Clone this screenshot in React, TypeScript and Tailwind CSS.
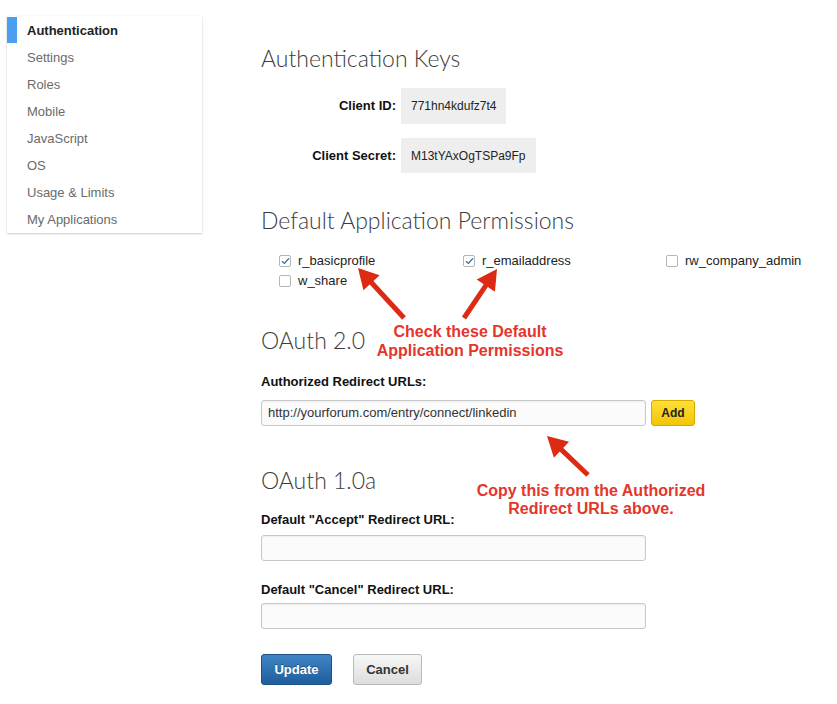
import React from "react";

const navItems = [
  "Authentication",
  "Settings",
  "Roles",
  "Mobile",
  "JavaScript",
  "OS",
  "Usage & Limits",
  "My Applications",
];

const Arrow = ({ x1, y1, x2, y2 }: { x1: number; y1: number; x2: number; y2: number }) => {
  // tail (x1,y1) -> tip (x2,y2)
  const dx = x2 - x1;
  const dy = y2 - y1;
  const len = Math.sqrt(dx * dx + dy * dy);
  const ux = dx / len;
  const uy = dy / len;
  const head = 20;
  const half = 11;
  const bx = x2 - ux * head;
  const by = y2 - uy * head;
  const pts = `${x2},${y2} ${bx - uy * half},${by + ux * half} ${bx + uy * half},${by - ux * half}`;
  return (
    <g>
      <line x1={x1} y1={y1} x2={bx + ux * 2} y2={by + uy * 2} stroke="#dc2a14" strokeWidth={5} />
      <polygon points={pts} fill="#dc2a14" />
    </g>
  );
};

const Check = ({ checked, label }: { checked?: boolean; label: string }) => (
  <label className="flex items-center gap-[7px] h-5">
    <span className="w-[12px] h-[12px] rounded-[2px] border border-[#b5b5b5] bg-white flex items-center justify-center">
      {checked && (
        <svg width="9" height="8" viewBox="0 0 9 8">
          <path d="M1 4.2 L3.4 6.4 L8 1.2" fill="none" stroke="#3d6f99" strokeWidth="1.3" />
        </svg>
      )}
    </span>
    <span className="text-[13px] text-[#222]">{label}</span>
  </label>
);

const Heading = ({ children, className }: { children: React.ReactNode; className?: string }) => (
  <h2 className={`font-['Lato',sans-serif] font-light text-[23px] leading-[28px] text-[#3c3c3c] ${className ?? ""}`}>
    {children}
  </h2>
);

const Label = ({ children, className }: { children: React.ReactNode; className?: string }) => (
  <div className={`text-[13px] leading-[18px] font-bold text-[#111] ${className ?? ""}`}>{children}</div>
);

const TextInput = ({ value }: { value?: string }) => (
  <div className="w-[385px] h-[26px] rounded-[3px] border border-[#c8c8c8] bg-[#fbfbfb] shadow-[inset_0_1px_2px_rgba(0,0,0,0.06)] px-[6px] flex items-center text-[13px] text-[#333]">
    {value}
  </div>
);

const App = () => {
  return (
    <div className="relative w-[837px] h-[704px] bg-white font-['Liberation_Sans',Arial,sans-serif] overflow-hidden">
      <div className="flex items-start">
        <nav className="ml-[7px] mt-[16px] w-[195px] bg-white pt-[1px] shadow-[0_1px_2px_rgba(0,0,0,0.22)]">
          {navItems.map((item, i) => (
            <div key={item} className="relative h-[27px] flex items-center pl-[20px]">
              {i === 0 && <span className="absolute left-0 top-0 bottom-[1px] w-[10px] bg-[#4a9ff0]" />}
              <span className={i === 0 ? "text-[13px] font-bold text-[#222]" : "text-[13px] text-[#6a6a6a]"}>{item}</span>
            </div>
          ))}
        </nav>

        <main className="ml-[59px] pt-[44px] w-[560px]">
          <Heading>Authentication Keys</Heading>

          <div className="mt-[16px] flex flex-col gap-[14px]">
            <div className="flex items-center">
              <Label className="w-[135px] text-right">Client ID:</Label>
              <div className="ml-[5px] h-[36px] px-[10px] flex items-center bg-[#eeeeee] text-[12px] text-[#222]">771hn4kdufz7t4</div>
            </div>
            <div className="flex items-center">
              <Label className="w-[135px] text-right">Client Secret:</Label>
              <div className="ml-[5px] h-[35px] px-[10px] flex items-center bg-[#eeeeee] text-[12px] text-[#222]">M13tYAxOgTSPa9Fp</div>
            </div>
          </div>

          <Heading className="mt-[33px]">Default Application Permissions</Heading>

          <div className="mt-[17px] pl-[18px] grid grid-cols-[184px_203px_1fr]">
            <Check checked label="r_basicprofile" />
            <Check checked label="r_emailaddress" />
            <Check label="rw_company_admin" />
            <Check label="w_share" />
          </div>

          <Heading className="mt-[35px]">OAuth 2.0</Heading>

          <Label className="mt-[19px]">Authorized Redirect URLs:</Label>
          <div className="mt-[9px] flex items-center gap-[5px]">
            <TextInput value="http://yourforum.com/entry/connect/linkedin" />
            <button className="w-[44px] h-[26px] rounded-[3px] border border-[#d6ab00] bg-gradient-to-b from-[#ffe033] to-[#f2c400] text-[12px] font-bold text-[#222]">
              Add
            </button>
          </div>

          <Heading className="mt-[40px]">OAuth 1.0a</Heading>

          <Label className="mt-[17px]">Default "Accept" Redirect URL:</Label>
          <div className="mt-[6px]">
            <TextInput />
          </div>

          <Label className="mt-[20px]">Default "Cancel" Redirect URL:</Label>
          <div className="mt-[4px]">
            <TextInput />
          </div>

          <div className="mt-[25px] flex gap-[21px]">
            <button className="w-[71px] h-[31px] rounded-[3px] border border-[#1b4f86] bg-gradient-to-b from-[#3f86c6] to-[#1f5d9c] text-[13px] font-bold text-white [text-shadow:0_-1px_0_rgba(0,0,0,0.35)]">
              Update
            </button>
            <button className="w-[69px] h-[31px] rounded-[3px] border border-[#b9b9b9] bg-gradient-to-b from-[#f7f7f7] to-[#dddddd] text-[13px] font-bold text-[#333]">
              Cancel
            </button>
          </div>
        </main>
      </div>

      {/* annotations */}
      <svg className="absolute inset-0 pointer-events-none" width="837" height="704">
        <Arrow x1={404} y1={318} x2={358} y2={268} />
        <Arrow x1={464} y1={318} x2={497} y2={269} />
        <Arrow x1={588} y1={475} x2={547} y2={436} />
      </svg>
      <div className="absolute left-[320px] top-[322px] w-[300px] text-center text-[16px] leading-[19px] font-bold text-[#e4362a]">
        Check these Default
        <br />
        Application Permissions
      </div>
      <div className="absolute left-[441px] top-[482px] w-[300px] text-center text-[16px] leading-[18px] font-bold text-[#e4362a]">
        Copy this from the Authorized
        <br />
        Redirect URLs above.
      </div>
    </div>
  );
};

export default App;
